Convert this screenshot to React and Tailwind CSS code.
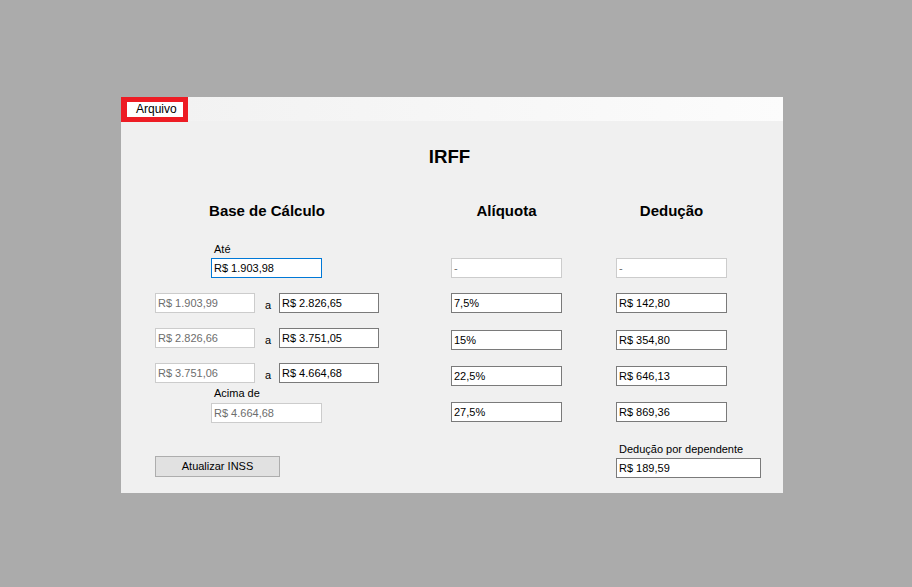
import React from 'react';

const font = { fontFamily: '"Liberation Sans", Arial, sans-serif' };

// text box in the three WinForms states seen in the screenshot
function Field({ value, kind = 'normal', className = '' }) {
  const look = {
    normal: 'border-[#7a7a7a] text-black',
    focus: 'border-[#0078d7] text-black',
    off: 'border-[#cccccc] text-[#6d6d6d]',
  }[kind];
  return (
    <div className={`h-[20px] shrink-0 border bg-white pl-[2px] text-[11px] leading-[18px] whitespace-nowrap ${look} ${className}`}>
      {value}
    </div>
  );
}

function Label({ children, className = '' }) {
  return <div className={`text-[11px] leading-[13px] text-black whitespace-nowrap ${className}`}>{children}</div>;
}

function Header({ children }) {
  return <div className="text-center text-[15px] font-bold leading-[18px] text-black whitespace-nowrap">{children}</div>;
}

const ranges = [
  ['R$ 1.903,99', 'R$ 2.826,65', 'mt-[15px]'],
  ['R$ 2.826,66', 'R$ 3.751,05', 'mt-[15px]'],
  ['R$ 3.751,06', 'R$ 4.664,68', 'mt-[15px]'],
];

const rates = [
  ['-', 'off', 'mt-[38px]'],
  ['7,5%', 'normal', 'mt-[15px]'],
  ['15%', 'normal', 'mt-[17px]'],
  ['22,5%', 'normal', 'mt-[16px]'],
  ['27,5%', 'normal', 'mt-[16px]'],
];

const deductions = [
  ['-', 'off', 'mt-[38px]'],
  ['R$ 142,80', 'normal', 'mt-[15px]'],
  ['R$ 354,80', 'normal', 'mt-[17px]'],
  ['R$ 646,13', 'normal', 'mt-[16px]'],
  ['R$ 869,36', 'normal', 'mt-[16px]'],
];

export default function App() {
  return (
    <div className="w-[912px] h-[587px] bg-[#ababab] pt-[97px] pl-[121px] overflow-hidden" style={font}>
      <div className="w-[662px] h-[396px] bg-[#f0f0f0] flex flex-col">
        {/* menu strip */}
        <div className="h-[24px] shrink-0 bg-linear-to-r from-[#f1f1f1] to-[#fcfcfc] relative z-10">
          <div className="w-[67px] h-[25px] border-[5px] border-l-[6px] border-[#ed1c24] bg-white pl-[9px] pt-[1px] text-[12px] leading-[13px] text-black">
            Arquivo
          </div>
        </div>

        <div className="flex-1 flex flex-col">
          <div className="mt-[25px] pr-[5px] text-center text-[18.67px] font-bold leading-[22px] text-black">IRFF</div>

          <div className="mt-[34px] flex pl-[34px]">
            {/* Base de Cálculo */}
            <div className="w-[224px] flex flex-col">
              <Header>Base de Cálculo</Header>
              <Label className="mt-[23px] ml-[59px]">Até</Label>
              <Field value="R$ 1.903,98" kind="focus" className="mt-[2px] ml-[56px] w-[111px]" />
              {ranges.map(([from, to, mt]) => (
                <div key={from} className={`flex items-center ${mt}`}>
                  <Field value={from} kind="off" className="w-[100px]" />
                  <span className="ml-[10px] w-[14px] text-[11px] leading-[13px] pt-[4px]">a</span>
                  <Field value={to} className="w-[100px]" />
                </div>
              ))}
              <Label className="mt-[4px] ml-[59px]">Acima de</Label>
              <Field value="R$ 4.664,68" kind="off" className="mt-[3px] ml-[56px] w-[111px]" />
              <button className="mt-[33px] w-[125px] h-[21px] border border-[#adadad] bg-[#e1e1e1] text-[11px] leading-[19px] text-black">
                Atualizar INSS
              </button>
            </div>

            {/* Alíquota */}
            <div className="ml-[72px] w-[111px] flex flex-col">
              <Header>Alíquota</Header>
              {rates.map(([v, k, mt]) => (
                <Field key={v} value={v} kind={k} className={`w-[111px] ${mt}`} />
              ))}
            </div>

            {/* Dedução */}
            <div className="ml-[54px] w-[111px] flex flex-col items-start">
              <div className="w-[111px]">
                <Header>Dedução</Header>
              </div>
              {deductions.map(([v, k, mt]) => (
                <Field key={v} value={v} kind={k} className={`w-[111px] ${mt}`} />
              ))}
              <Label className="mt-[21px] ml-[3px]">Dedução por dependente</Label>
              <Field value="R$ 189,59" className="mt-[2px] w-[145px]" />
            </div>
          </div>
        </div>
      </div>
    </div>
  );
}
